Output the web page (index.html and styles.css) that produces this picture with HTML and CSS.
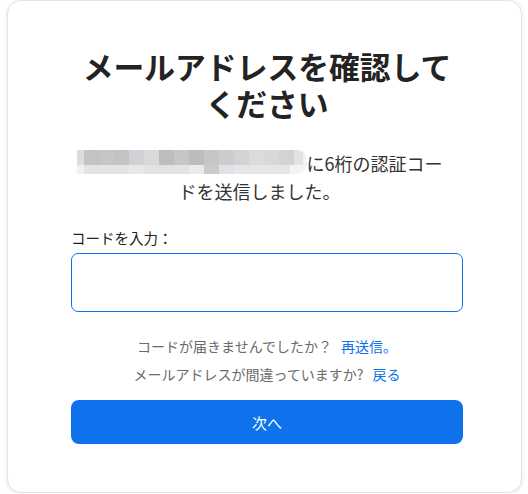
FILE: index.html
```html
<!DOCTYPE html>
<html lang="ja">
<head>
<meta charset="utf-8">
<title>メールアドレスを確認してください</title>
<link rel="stylesheet" href="styles.css">
</head>
<body>
<div class="card">
  <div class="content">
    <h1 class="title">メールアドレスを確認してください</h1>
    <p class="lead"><span class="masked" aria-label="メールアドレス"></span>に6桁の認証コードを送信しました。</p>
    <label class="label" for="code">コードを入力：</label>
    <input class="code-input" id="code" type="text" inputmode="numeric">
    <div class="help">
      <p class="help-line">コードが届きませんでしたか？<span class="gap"></span><a class="link" href="#">再送信。</a></p>
      <p class="help-line">メールアドレスが間違っていますか?<span class="gap"></span><a class="link" href="#">戻る</a></p>
    </div>
    <button class="btn" type="button">次へ</button>
  </div>
</div>
</body>
</html>
```

FILE: styles.css
```css
html, body {
  margin: 0;
  padding: 0;
  background: #ffffff;
}
body {
  font-family: "Noto Sans CJK JP", "Noto Sans", sans-serif;
  color: #232333;
}
.card {
  box-sizing: border-box;
  margin-left: 7px;
  width: 515px;
  height: 493px;
  background: #fff;
  border: 1px solid #e3e3e3;
  border-radius: 14px;
  box-shadow: 0 1px 4px rgba(0, 0, 0, 0.10);
  padding: 0 58px 0 63px;
}
.content {
  display: flex;
  flex-direction: column;
}
.title {
  margin: 46px 0 0;
  padding: 0 8px;
  font-size: 30.8px;
  line-height: 37px;
  font-weight: 700;
  text-align: center;
  color: #232323;
}
.lead {
  margin: 28px 15px 0 0;
  font-size: 18px;
  line-height: 28px;
  text-align: center;
  color: #333;
}
.masked {
  display: inline-block;
  width: 230px;
  height: 24px;
  vertical-align: -3px;
  border-radius: 0 10px 10px 0;
  filter: blur(0.4px);
  background:
    linear-gradient(90deg,
      #dcdcdc 0 7px, #c3c3c3 7px 22px, #c6c6c6 22px 37px, #c3c3c3 37px 52px,
      #d0d2d5 52px 67px, #d9d9d9 67px 82px, #bdbdbd 82px 97px, #c6c6c6 97px 112px,
      #bcbcbc 112px 127px, #c6c6c6 127px 142px, #cacdd0 142px 157px, #d3d3d3 157px 172px,
      #dbdbdb 172px 187px, #d7d8d9 187px 202px, #d3d3d3 202px 217px, #e2e2e2 217px 226px, #f2f2f2 226px)
      top / 100% 15px no-repeat,
    linear-gradient(90deg,
      #f0f0f0 0 7px, #e4e4e4 7px 52px, #e8e8e8 52px 67px, #e2e2e2 67px 97px,
      #e4e4e4 97px 112px, #eaebeb 112px 127px, #cacaca 127px 142px, #e0e2e5 142px 157px,
      #e6e6e6 157px 213px, #f3f3f3 213px)
      bottom / 100% 9px no-repeat;
}
.label {
  margin-top: 23px;
  font-size: 14.5px;
  line-height: 20px;
  color: #222;
}
.code-input {
  box-sizing: border-box;
  margin-top: 5px;
  width: 100%;
  height: 59px;
  border: 1px solid #0e71eb;
  border-radius: 7px;
  outline: none;
  font: inherit;
  font-size: 18px;
  padding: 0 12px;
}
.help {
  margin-top: 20px;
  text-align: center;
}
.help-line {
  margin: 0;
  font-size: 14px;
  line-height: 28px;
  color: #6a6a6a;
}
.gap {
  display: inline-block;
  width: 9px;
}
.link {
  color: #0e71eb;
  text-decoration: none;
}
.btn {
  margin-top: 12px;
  height: 44px;
  width: 100%;
  border: none;
  border-radius: 8px;
  background: #0e72ed;
  color: #fff;
  font-family: inherit;
  font-size: 15px;
  cursor: pointer;
}
```
